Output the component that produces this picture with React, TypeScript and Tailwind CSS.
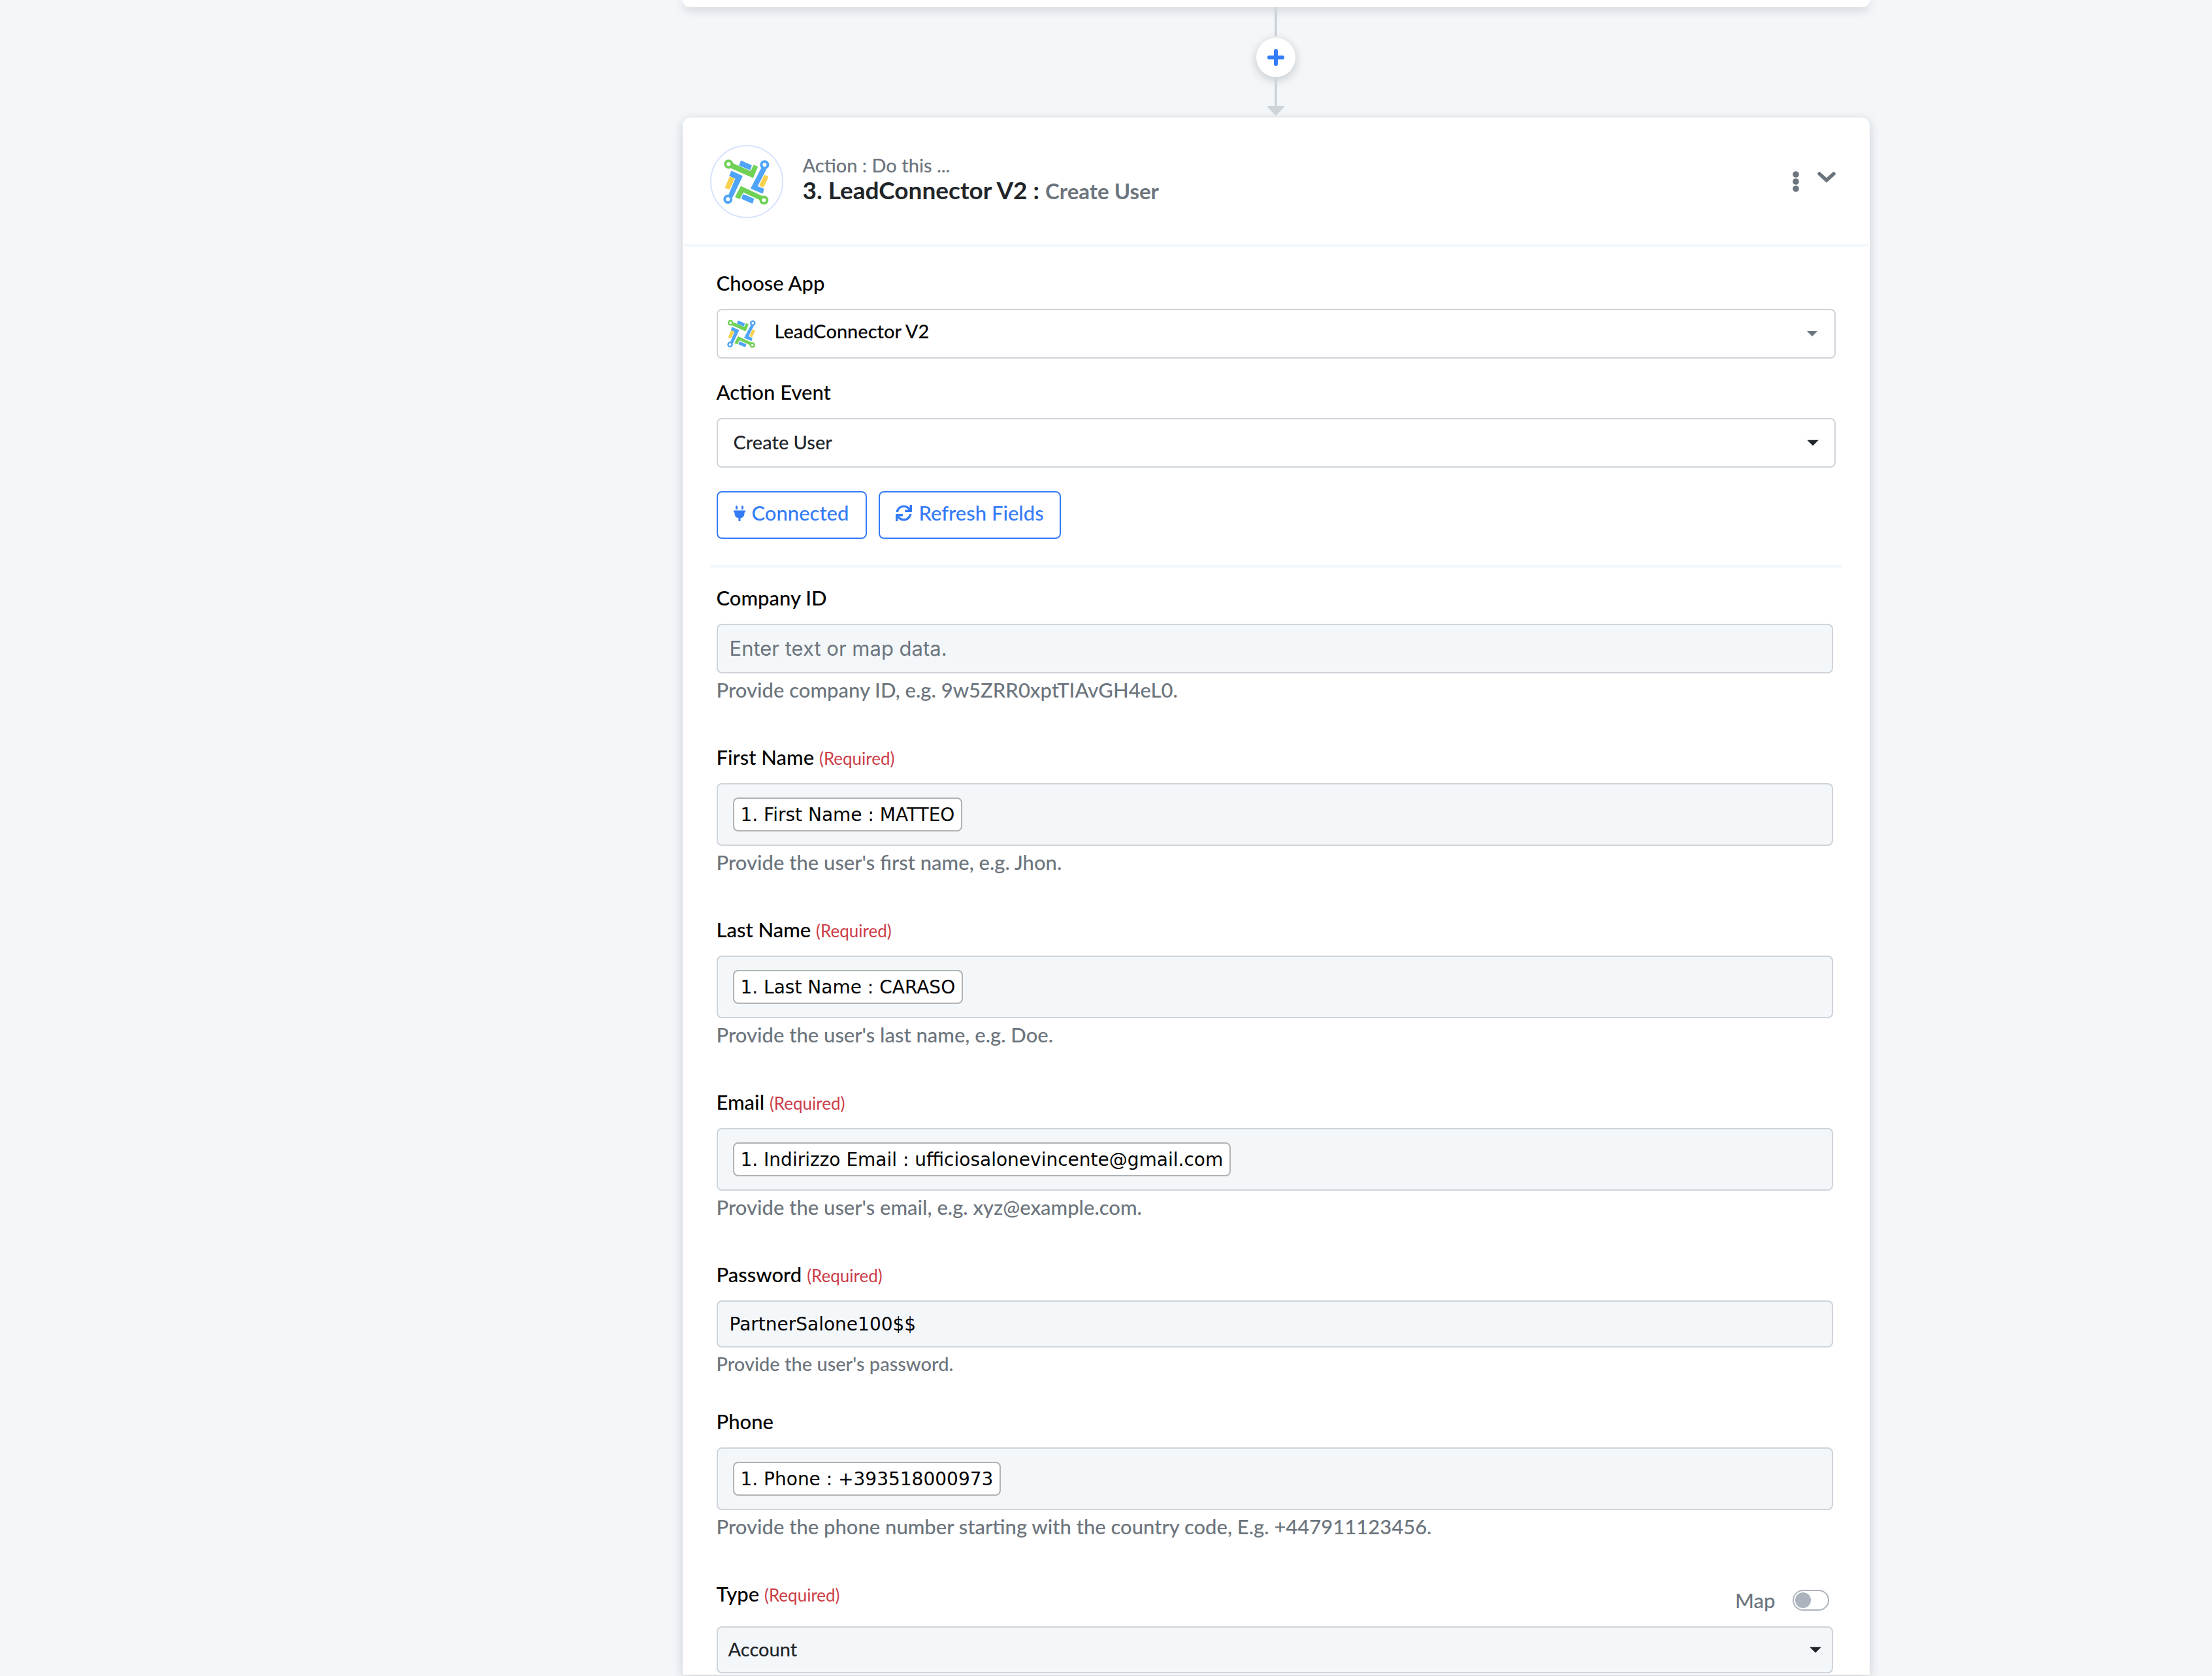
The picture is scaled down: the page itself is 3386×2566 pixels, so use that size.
import React from 'react';
import { FaPlug, FaSync } from 'react-icons/fa';

const LABEL = 'text-[31px] leading-10 font-medium text-black';
const FIELD = 'w-full rounded-lg border-2 border-[#ced4da]';

const Logo: React.FC<{ className: string }> = ({ className }) => (
  <svg viewBox="110 127 214 212" className={className} aria-hidden="true">
    <g strokeLinejoin="round" strokeWidth="5">
      <g fill="#4fa4f7" stroke="#4fa4f7">
        <path d="M193 137L239 158L233 176L186 156Z" />
        <path d="M289 168L306 175L266 254L296 266L291 284L240 262Z" />
        <path d="M203 292L250 312L244 330L197 310Z" />
        <path d="M149 185L197 207L152 302L136 295L169 217L141 204Z" />
      </g>
      <g fill="#6fd155" stroke="#6fd155">
        <path d="M156 150L238 186L252 157L267 164L247 212L148 168Z" />
        <path d="M192 255L289 300L281 315L202 278L186 309L168 302Z" />
      </g>
      <g fill="#f8d14e" stroke="#f8d14e">
        <path d="M301 203L316 210L295 256L279 249Z" />
        <path d="M141 211L160 219L138 265L121 259Z" />
      </g>
    </g>
    <g fill="#fff" strokeWidth="12">
      <circle cx="135" cy="151" r="15" stroke="#6fd155" />
      <circle cx="298" cy="317" r="15" stroke="#6fd155" />
      <circle cx="301" cy="154" r="15" stroke="#4fa4f7" />
      <circle cx="132" cy="313" r="15" stroke="#4fa4f7" />
    </g>
  </svg>
);

const Caret: React.FC<{ className: string }> = ({ className }) => (
  <svg viewBox="0 0 18 9" className={`pointer-events-none absolute top-1/2 -translate-y-1/2 fill-current ${className}`} aria-hidden="true">
    <path d="M0 0H18L9 9Z" />
  </svg>
);

const Connector: React.FC = () => (
  <div className="flex flex-col items-center">
    <div className="h-11 w-1 bg-[#ced4d8]" />
    <button
      type="button"
      aria-label="Add step"
      className="mt-[3px] flex size-[60px] items-center justify-center rounded-full bg-white shadow-[0_4px_16px_rgba(0,0,0,0.2)]"
    >
      <svg viewBox="0 0 26 26" className="size-[26px]" stroke="#347bf7" strokeWidth="6" strokeLinecap="round">
        <path d="M13 3V23M3 13H23" />
      </svg>
    </button>
    <div className="h-11 w-1 bg-[#ced4d8]" />
    <svg viewBox="0 0 26 15" className="mb-[3px] h-[15px] w-[26px]" fill="#ced4d8" stroke="#ced4d8" strokeWidth="2" strokeLinejoin="round">
      <path d="M1 1H25L13 14Z" />
    </svg>
  </div>
);

const CardHeader: React.FC = () => (
  <div className="mx-0.5 flex items-center justify-between border-b-4 border-[#f0f7ff] pt-[42px] pr-[50px] pb-10 pl-10">
    <div className="flex items-center gap-[30px]">
      <div className="flex size-28 items-center justify-center rounded-full border-2 border-[#d6e3fd]">
        <Logo className="size-[71px]" />
      </div>
      <div className="pb-2.5">
        <p className="text-[29px] leading-9 font-medium text-[#6c757d]">Action : Do this ...</p>
        <h2 className="text-[37px] leading-10 font-bold text-[#212529]">
          3. LeadConnector V2 : <span className="text-[33px] text-[#6c757d]">Create User</span>
        </h2>
      </div>
    </div>
    <div className="flex items-start gap-7 text-[#6c757d]">
      <button type="button" aria-label="More options">
        <svg viewBox="0 0 10 32" className="h-8 w-2.5 fill-current">
          <circle cx="5" cy="5" r="4.8" />
          <circle cx="5" cy="16" r="4.8" />
          <circle cx="5" cy="27" r="4.8" />
        </svg>
      </button>
      <button type="button" aria-label="Collapse">
        <svg viewBox="0 0 28 18" className="h-[18px] w-7" fill="none" stroke="currentColor" strokeWidth="5.5" strokeLinecap="round">
          <path d="M3 4L14 14L25 4" />
        </svg>
      </button>
    </div>
  </div>
);

const Required: React.FC = () => <span className="text-[26px] leading-none font-normal text-[#cc3d47]">(Required)</span>;

interface FieldProps {
  id: string;
  label: string;
  required?: boolean;
  help: string;
  helpClass?: string;
  children: React.ReactNode;
}

const Field: React.FC<FieldProps> = ({ id, label, required, help, helpClass = 'mb-[63px] text-[31px]', children }) => (
  <div>
    <label htmlFor={id} className={`mb-5 block ${LABEL}`}>
      {label} {required && <Required />}
    </label>
    {children}
    <p className={`mt-[5px] leading-10 font-medium text-[#6c757d] ${helpClass}`}>{help}</p>
  </div>
);

// Text box whose value is a mapped token from an earlier step
const TokenInput: React.FC<{ id: string; token: string }> = ({ id, token }) => (
  <div className={`flex h-24 items-center bg-[#f3f7fa] px-[23px] ${FIELD}`}>
    <span className="flex h-[52px] items-center rounded-lg border-2 border-[#b0b2b4] bg-white px-2.5 pt-0.5 font-['DejaVu_Sans',sans-serif] text-[28px] whitespace-nowrap text-black">
      {token}
    </span>
    <input id={id} type="text" className="min-w-0 flex-1 bg-transparent outline-none" />
  </div>
);

const App: React.FC = () => {
  return (
    <main className="min-h-screen bg-[#f3f7fa] pl-[520px] font-['Lato',sans-serif]">
      <div className="mx-auto w-full max-w-[1817px]">
        <div className="h-[11px] rounded-b-xl bg-white shadow-[0_4px_16px_rgba(33,37,41,0.2)]" />
        <Connector />

        <section className="rounded-t-xl bg-white shadow-[0_4px_16px_rgba(33,37,41,0.2)]">
          <CardHeader />

          <form className="px-[42px] pt-[35px] pb-0.5">
            <div className="px-2.5">
              <label htmlFor="app" className={`mb-5 block ${LABEL}`}>Choose App</label>
              <div className="relative mb-[31px]">
                <select id="app" className={`block h-[76px] appearance-none bg-white pb-2 pl-[87px] text-[29px] font-medium text-black ${FIELD}`}>
                  <option>LeadConnector V2</option>
                </select>
                <Logo className="pointer-events-none absolute top-4 left-4 size-11" />
                <Caret className="right-7 h-2 w-4 text-[#6c757d]" />
              </div>

              <label htmlFor="event" className={`mb-5 block ${LABEL}`}>Action Event</label>
              <div className="relative mb-9">
                <select id="event" className={`block h-[76px] appearance-none bg-white pb-0.5 pl-6 text-[29px] font-medium text-[#212529] ${FIELD}`}>
                  <option>Create User</option>
                </select>
                <Caret className="right-[26px] h-[9px] w-[18px] text-[#212529]" />
              </div>

              <div className="mb-10 flex gap-[18px] text-[31px] font-medium text-[#347bf7]">
                <button type="button" className="flex h-[73px] items-center gap-2.5 rounded-lg border-2 border-[#347bf7] pr-[26px] pb-1.5 pl-6">
                  <FaPlug className="h-6 w-[18px]" />
                  Connected
                </button>
                <button type="button" className="flex h-[73px] items-center gap-2.5 rounded-lg border-2 border-[#347bf7] px-6 pb-1.5">
                  <FaSync className="size-[25px]" />
                  Refresh Fields
                </button>
              </div>
            </div>

            <hr className="mb-[26px] border-t-4 border-[#f0f7ff]" />

            <div className="pr-3.5 pl-2.5">
              <Field id="company" label="Company ID" help="Provide company ID, e.g. 9w5ZRR0xptTIAvGH4eL0.">
                <input
                  id="company"
                  type="text"
                  placeholder="Enter text or map data."
                  className={`block h-[76px] bg-[#f3f7fa] px-[18px] pb-0.5 font-['Inter',sans-serif] text-[31px] placeholder:text-[#6c757d] ${FIELD}`}
                />
              </Field>
              <Field id="first-name" label="First Name" required help="Provide the user's first name, e.g. Jhon.">
                <TokenInput id="first-name" token="1. First Name : MATTEO" />
              </Field>
              <Field id="last-name" label="Last Name" required help="Provide the user's last name, e.g. Doe.">
                <TokenInput id="last-name" token="1. Last Name : CARASO" />
              </Field>
              <Field id="email" label="Email" required help="Provide the user's email, e.g. xyz@example.com.">
                <TokenInput id="email" token="1. Indirizzo Email : ufficiosalonevincente@gmail.com" />
              </Field>
              <Field id="password" label="Password" required help="Provide the user's password." helpClass="mb-12 text-[29px]">
                <input
                  id="password"
                  type="text"
                  defaultValue="PartnerSalone100$$"
                  className={`block h-[72px] bg-[#f3f7fa] px-[18px] font-['DejaVu_Sans',sans-serif] text-[28px] text-black ${FIELD}`}
                />
              </Field>
              <Field id="phone" label="Phone" help="Provide the phone number starting with the country code, E.g. +447911123456.">
                <TokenInput id="phone" token="1. Phone : +393518000973" />
              </Field>

              <div className="mb-5 flex h-[50px] justify-between">
                <label htmlFor="type" className={LABEL}>
                  Type <Required />
                </label>
                <label className="flex items-center gap-[26px] self-end pr-1.5 text-[31px] leading-10 font-medium text-[#6c757d]">
                  Map
                  <input
                    type="checkbox"
                    role="switch"
                    className="h-8 w-14 appearance-none rounded-full border-2 border-[#adb3bc] bg-white p-0.5 before:block before:size-6 before:rounded-full before:bg-[#adb3bc]"
                  />
                </label>
              </div>
              <div className="relative">
                <select id="type" className={`block h-[72px] appearance-none bg-[#f3f7fa] pb-0.5 pl-4 text-[29px] font-medium text-[#212529] ${FIELD}`}>
                  <option>Account</option>
                </select>
                <Caret className="right-[18px] h-[9px] w-[18px] text-[#212529]" />
              </div>
            </div>
          </form>
        </section>
      </div>
    </main>
  );
};

export default App;
